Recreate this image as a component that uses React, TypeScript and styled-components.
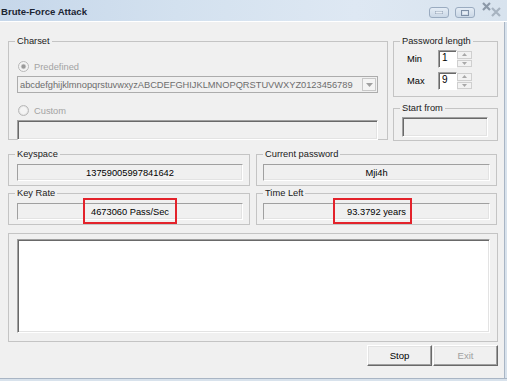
import styled, { createGlobalStyle } from "styled-components";

const GlobalStyle = createGlobalStyle`
  html, body {
    margin: 0;
    padding: 0;
    background: #F0F0F0;
  }
  body {
    font-family: "Liberation Sans", Arial, sans-serif;
    font-size: 9.3px;
    color: #000;
  }
`;

const CHARSET = "abcdefghijklmnopqrstuvwxyzABCDEFGHIJKLMNOPQRSTUVWXYZ0123456789";

const Spinner = () => (
  <Spin>
    <SpinButton>
      <svg width="5" height="3" viewBox="0 0 5 3"><path d="M0 3 L2.5 0 L5 3 Z" fill="#A8A8A8" /></svg>
    </SpinButton>
    <SpinButton>
      <svg width="5" height="3" viewBox="0 0 5 3"><path d="M0 0 L2.5 3 L5 0 Z" fill="#A8A8A8" /></svg>
    </SpinButton>
  </Spin>
);

const App = () => {
  return (
    <>
      <GlobalStyle />
      <Window>
        <TitleBar>
          <Title>Brute-Force Attack</Title>
          <Caption>
            <CapButton>
              <svg width="8" height="3" viewBox="0 0 8 3"><rect x="0" y="0" width="8" height="3" rx="1" fill="#E8EEF5" stroke="#7E8FA6" strokeWidth="0.8" /></svg>
            </CapButton>
            <CapButton>
              <svg width="8" height="6" viewBox="0 0 8 6"><rect x="0.5" y="0.5" width="7" height="5" fill="none" stroke="#7E8FA6" strokeWidth="1" /><rect x="2" y="2" width="4" height="2" fill="#E8EEF5" /></svg>
            </CapButton>
            <CloseGlyph>
              <svg width="22" height="16" viewBox="0 0 22 16">
                <path d="M2 2 L9 9 M9 2 L2 9" stroke="#8C99A8" strokeWidth="2.2" />
                <path d="M11 7 L19 15 M19 7 L11 15" stroke="#A7B3C0" strokeWidth="2.2" />
              </svg>
            </CloseGlyph>
          </Caption>
        </TitleBar>
        <Frame>
          <Client>
            <TopRow>
              <Group $w={380} $h={105}>
                <Legend>Charset</Legend>
                <Body $pad="13px 9px 2px 8px">
                  <RadioRow>
                    <Radio $checked />
                    <Dim>Predefined</Dim>
                  </RadioRow>
                  <Combo>
                    <ComboText>{CHARSET}</ComboText>
                    <ComboArrow>
                      <svg width="7" height="4" viewBox="0 0 7 4"><path d="M0 0 L3.5 4 L7 0 Z" fill="#A0A0A0" /></svg>
                    </ComboArrow>
                  </Combo>
                  <RadioRow $top={11}>
                    <Radio />
                    <Dim>Custom</Dim>
                  </RadioRow>
                  <Edit $h={20} $top={3} />
                </Body>
              </Group>
              <SideColumn>
                <Group $w={105} $h={62}>
                  <Legend>Password length</Legend>
                  <Body $pad="3px 0 6px 13px">
                    <SpinRow>
                      <SpinLabel>Min</SpinLabel>
                      <SpinEdit>1</SpinEdit>
                      <Spinner />
                    </SpinRow>
                    <SpinRow $top={4}>
                      <SpinLabel>Max</SpinLabel>
                      <SpinEdit>9</SpinEdit>
                      <Spinner />
                    </SpinRow>
                  </Body>
                </Group>
                <Group $w={105} $h={39}>
                  <Legend>Start from</Legend>
                  <Body $pad="3px 9px 3px 8px">
                    <Edit $h={20} />
                  </Body>
                </Group>
              </SideColumn>
            </TopRow>
            <InfoGrid>
              <Group $w={242} $h={38}>
                <Legend>Keyspace</Legend>
                <Body $pad="4px 6px 0 8px">
                  <Field>13759005997841642</Field>
                </Body>
              </Group>
              <Group $w={241} $h={38}>
                <Legend>Current password</Legend>
                <Body $pad="4px 6px 0 6px">
                  <Field>Mji4h</Field>
                </Body>
              </Group>
              <Group $w={242} $h={38}>
                <Legend>Key Rate</Legend>
                <Body $pad="4px 6px 0 8px">
                  <Field>
                    <Marked $l={8} $r={8}>4673060 Pass/Sec</Marked>
                  </Field>
                </Body>
              </Group>
              <Group $w={241} $h={38}>
                <Legend>Time Left</Legend>
                <Body $pad="4px 6px 0 6px">
                  <Field>
                    <Marked $l={14} $r={6}>93.3792 years</Marked>
                  </Field>
                </Body>
              </Group>
            </InfoGrid>
            <LogBox>
              <LogArea />
            </LogBox>
            <ButtonRow>
              <Button>Stop</Button>
              <Button disabled>Exit</Button>
            </ButtonRow>
          </Client>
          <SideFrame />
        </Frame>
        <BottomFrame />
      </Window>
    </>
  );
};

export default App;

const Window = styled.div`
  width: 507px;
  height: 381px;
  display: flex;
  flex-direction: column;
  overflow: hidden;
`;
const TitleBar = styled.div`
  height: 22px;
  flex: none;
  display: flex;
  align-items: center;
  justify-content: space-between;
  box-sizing: border-box;
  padding-left: 1px;
  background: linear-gradient(90deg, #C6D7EA 0%, #D3E1EF 35%, #DEE8F3 70%, #D8E3EE 100%);
  border-bottom: 1px solid #FFFFFF;
`;
const Title = styled.span`
  font-weight: bold;
  font-size: 9.6px;
  color: #1C2533;
  margin-top: 1px;
`;
const Caption = styled.div`
  display: flex;
  align-items: flex-start;
  align-self: stretch;
  padding-right: 4px;
  gap: 6px;
`;
const CapButton = styled.div`
  width: 20px;
  height: 11px;
  margin-top: 7px;
  box-sizing: border-box;
  border: 1px solid #9AABC0;
  border-radius: 3px;
  background: linear-gradient(#E4ECF5, #CBD8E6);
  display: flex;
  align-items: center;
  justify-content: center;
`;
const CloseGlyph = styled.div`
  width: 22px;
  height: 18px;
  margin-top: 1px;
`;
const Frame = styled.div`
  flex: 1;
  display: flex;
`;
const Client = styled.div`
  width: 504px;
  flex: none;
  box-sizing: border-box;
  padding: 13px 0 0 8px;
  display: flex;
  flex-direction: column;
`;
const SideFrame = styled.div`
  flex: 1;
  background: linear-gradient(90deg, #A9B5C4 0 1px, #D8E2EC 1px);
`;
const BottomFrame = styled.div`
  height: 3px;
  flex: none;
  background: linear-gradient(#A9B5C4 0 1px, #D8E2EC 1px);
`;
const TopRow = styled.div`
  display: flex;
  align-items: flex-start;
  gap: 5px;
`;
const SideColumn = styled.div`
  display: flex;
  flex-direction: column;
  gap: 5px;
`;
const Group = styled.fieldset<{ $w: number; $h: number }>`
  width: ${(p) => p.$w}px;
  height: ${(p) => p.$h}px;
  box-sizing: border-box;
  margin: 0;
  padding: 0;
  min-width: 0;
  border: 1px solid #C4C4C4;
  border-radius: 0;
  position: relative;
`;
const Legend = styled.legend`
  margin-left: 6px;
  padding: 0 2px;
  line-height: 12px;
  color: #1A1A1A;
`;
const Body = styled.div<{ $pad: string }>`
  padding: ${(p) => p.$pad};
  display: flex;
  flex-direction: column;
`;
const RadioRow = styled.div<{ $top?: number }>`
  height: 13px;
  margin-top: ${(p) => p.$top ?? 0}px;
  display: flex;
  align-items: center;
  gap: 5px;
  padding-left: 1px;
`;
const Radio = styled.span<{ $checked?: boolean }>`
  width: 11px;
  height: 11px;
  box-sizing: border-box;
  border-radius: 50%;
  border: 1px solid #B8B8B8;
  background: ${(p) =>
    p.$checked
      ? "radial-gradient(circle, #9A9A9A 0 1.6px, #D6D6D6 2.4px, #F4F4F4 3.2px)"
      : "radial-gradient(circle, #F4F4F4 0 3px, #E2E2E2 4.5px)"};
`;
const Dim = styled.span`
  color: #A3A3A3;
`;
const Combo = styled.div`
  margin-top: 3px;
  height: 17px;
  box-sizing: border-box;
  border: 1px solid #ACACAC;
  background: #F0F0F0;
  display: flex;
  align-items: center;
`;
const ComboText = styled.span`
  flex: 1;
  padding-left: 2px;
  color: #6D6D6D;
  letter-spacing: -0.02px;
  white-space: nowrap;
  overflow: hidden;
`;
const ComboArrow = styled.span`
  width: 14px;
  height: 13px;
  margin-right: 1px;
  box-sizing: border-box;
  border: 1px solid #C8C8C8;
  background: #F4F4F4;
  display: flex;
  align-items: center;
  justify-content: center;
`;
const Edit = styled.div<{ $h: number; $top?: number }>`
  height: ${(p) => p.$h}px;
  margin-top: ${(p) => p.$top ?? 0}px;
  box-sizing: border-box;
  border: 1px solid;
  border-color: #A0A0A0 #FFFFFF #FFFFFF #A0A0A0;
  box-shadow: inset 1px 1px 0 #696969, inset -1px -1px 0 #E3E3E3;
  background: #F0F0F0;
`;
const SpinRow = styled.div<{ $top?: number }>`
  height: 18px;
  margin-top: ${(p) => p.$top ?? 0}px;
  display: flex;
  align-items: stretch;
`;
const SpinLabel = styled.span`
  width: 31px;
  display: flex;
  align-items: center;
`;
const SpinEdit = styled.div`
  width: 19px;
  box-sizing: border-box;
  padding: 1px 0 0 3px;
  border: 1px solid;
  border-color: #A0A0A0 #FFFFFF #FFFFFF #A0A0A0;
  box-shadow: inset 1px 1px 0 #696969;
  background: #FFFFFF;
  font-size: 10px;
`;
const Spin = styled.div`
  width: 15px;
  display: flex;
  flex-direction: column;
  padding: 1px 0;
  box-sizing: border-box;
  gap: 1px;
`;
const SpinButton = styled.div`
  flex: 1;
  box-sizing: border-box;
  border: 1px solid #CFCFCF;
  background: #F2F2F2;
  display: flex;
  align-items: center;
  justify-content: center;
`;
const InfoGrid = styled.div`
  display: grid;
  grid-template-columns: 242px 241px;
  column-gap: 6px;
  row-gap: 1px;
  margin-top: 7px;
`;
const Field = styled.div`
  height: 17px;
  box-sizing: border-box;
  border: 1px solid;
  border-color: #A0A0A0 #FFFFFF #FFFFFF #A0A0A0;
  box-shadow: inset -1px -1px 0 #E3E3E3;
  background: #F0F0F0;
  display: flex;
  align-items: center;
  justify-content: center;
  color: #000;
`;
const Marked = styled.span<{ $l: number; $r: number }>`
  position: relative;
  &::before {
    content: "";
    position: absolute;
    top: -9px;
    bottom: -7px;
    left: -${(p) => p.$l}px;
    right: -${(p) => p.$r}px;
    border: 2px solid #E3222B;
  }
`;
const LogBox = styled.div`
  width: 490px;
  height: 109px;
  margin-top: 8px;
  box-sizing: border-box;
  border: 1px solid #C4C4C4;
  padding: 5px 7px 8px 8px;
  display: flex;
`;
const LogArea = styled.div`
  flex: 1;
  box-sizing: border-box;
  border: 1px solid;
  border-color: #A0A0A0 #FFFFFF #FFFFFF #A0A0A0;
  box-shadow: inset 1px 1px 0 #696969, inset -1px -1px 0 #E3E3E3;
  background: #FFFFFF;
`;
const ButtonRow = styled.div`
  width: 490px;
  margin-top: 3px;
  display: flex;
  justify-content: flex-end;
  gap: 1px;
`;
const Button = styled.button`
  width: 65px;
  height: 21px;
  box-sizing: border-box;
  margin: 0;
  padding: 0;
  border: 1px solid;
  border-color: #FFFFFF #696969 #696969 #FFFFFF;
  box-shadow: inset -1px -1px 0 #A0A0A0, inset 1px 1px 0 #E3E3E3;
  background: #F0F0F0;
  font-family: inherit;
  font-size: 9.6px;
  color: #000;
  &:disabled {
    color: #A0A0A0;
  }
`;
